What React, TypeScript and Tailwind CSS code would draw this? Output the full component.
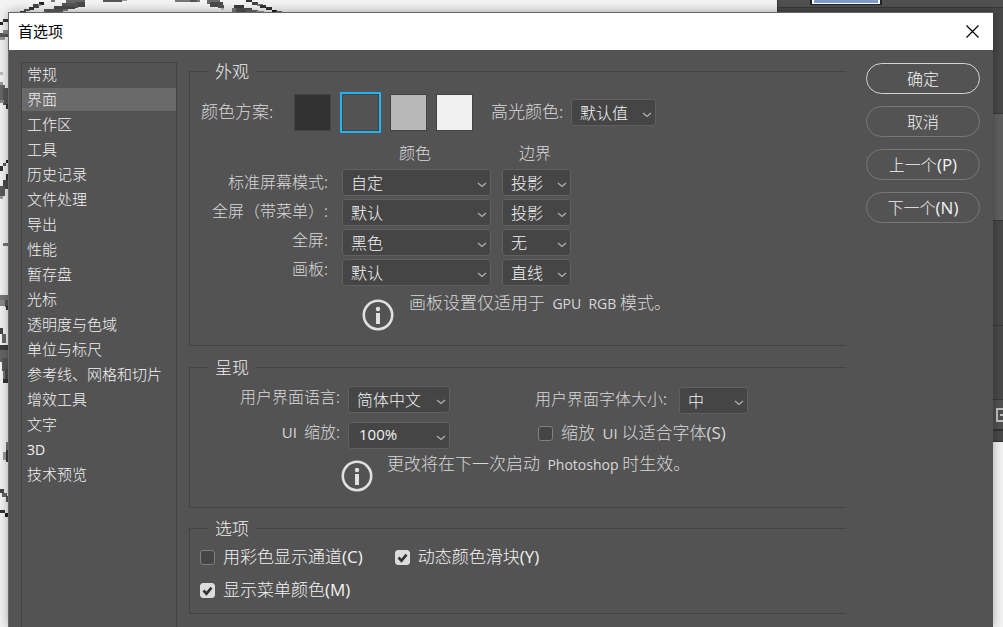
import { useState, type ReactNode } from "react";

const categories = [
    "常规",
    "界面",
    "工作区",
    "工具",
    "历史记录",
    "文件处理",
    "导出",
    "性能",
    "暂存盘",
    "光标",
    "透明度与色域",
    "单位与标尺",
    "参考线、网格和切片",
    "增效工具",
    "文字",
    "3D",
    "技术预览",
];

const screenModes = [
    { id: "standard", label: "标准屏幕模式:", color: "自定", border: "投影" },
    { id: "full-menu", label: "全屏（带菜单）:", color: "默认", border: "投影" },
    { id: "full", label: "全屏:", color: "黑色", border: "无" },
    { id: "artboard", label: "画板:", color: "默认", border: "直线" },
];

const themes = [
    { name: "深色", className: "bg-[#323232]" },
    { name: "中深色", className: "bg-[#535353]" },
    { name: "中浅色", className: "bg-[#b8b8b8]" },
    { name: "浅色", className: "bg-[#f0f0f0]" },
];

// x, y, width, height, fill
const pixels: [number, number, number, number, string][] = [
    [39, 2, 5, 3, "#222"], [33, 4, 6, 4, "#444"], [38, 4, 3, 2, "#888"], [29, 7, 5, 3, "#333"], [24, 9, 6, 2, "#555"], [20, 11, 6, 2, "#333"],
    [51, 0, 4, 2, "#777"], [66, 0, 19, 3, "#666"], [76, 2, 9, 5, "#4a4a4a"], [62, 3, 16, 5, "#555"], [54, 6, 21, 3, "#4a4a4a"], [60, 9, 8, 2, "#777"],
    [44, 9, 19, 4, "#5a5a5a"], [103, 0, 19, 2, "#555"], [122, 0, 5, 1, "#999"], [175, 0, 25, 2, "#777"], [190, 0, 7, 2, "#555"],
    [207, 0, 13, 4, "#6a6a6a"], [210, 2, 13, 5, "#4a4a4a"], [218, 5, 6, 3, "#555"], [221, 8, 3, 2, "#bbb"],
    [246, 0, 6, 2, "#333"], [252, 2, 6, 3, "#444"], [257, 4, 6, 2, "#777"], [260, 5, 6, 3, "#333"], [266, 7, 6, 3, "#333"], [272, 10, 5, 3, "#222"], [276, 11, 6, 2, "#666"],
    [234, 5, 10, 5, "#3c3c3c"], [232, 8, 9, 4, "#777"], [236, 8, 16, 4, "#505050"], [246, 10, 12, 3, "#666"], [256, 11, 8, 2, "#999"],
    [0, 22, 3, 3, "#222"], [3, 19, 6, 3, "#333"], [0, 33, 9, 4, "#555"], [3, 30, 6, 4, "#888"], [0, 37, 5, 3, "#999"],
    [0, 72, 3, 3, "#bbb"], [0, 82, 3, 3, "#999"], [0, 85, 5, 15, "#666"], [3, 88, 6, 17, "#555"], [0, 100, 4, 3, "#888"], [6, 104, 3, 5, "#333"],
    [6, 160, 3, 3, "#222"], [3, 163, 3, 3, "#555"], [0, 166, 3, 5, "#333"], [6, 174, 3, 9, "#333"], [3, 180, 5, 9, "#4a4a4a"],
    [0, 186, 5, 10, "#5a5a5a"], [0, 196, 3, 3, "#999"], [3, 243, 6, 3, "#777"], [0, 295, 9, 5, "#777"], [0, 300, 5, 6, "#888"], [5, 300, 4, 7, "#555"], [6, 306, 3, 4, "#333"],
    [0, 328, 3, 6, "#444"], [2, 334, 4, 9, "#666"], [0, 345, 9, 5, "#3c3c3c"], [0, 350, 9, 12, "#666"], [2, 358, 7, 13, "#555"], [3, 371, 3, 8, "#777"], [5, 369, 4, 11, "#4a4a4a"], [3, 379, 6, 4, "#333"],
    [6, 442, 3, 9, "#777"], [3, 452, 3, 8, "#999"], [6, 450, 3, 12, "#3c3c3c"], [0, 489, 4, 4, "#444"], [2, 493, 5, 4, "#666"], [6, 496, 3, 6, "#555"], [0, 510, 5, 3, "#333"], [5, 513, 4, 4, "#222"],
];

function Backdrop() {
    return (
        <div aria-hidden="true" className="absolute inset-0 overflow-hidden bg-[#f3f3f3]">
            <svg width="300" height="627" className="absolute top-0 left-0" shapeRendering="crispEdges">
                {pixels.map(([x, y, w, h, fill], i) => (
                    <rect key={i} x={x} y={y} width={w} height={h} fill={fill} />
                ))}
            </svg>
            <div className="absolute top-0 right-0 h-[442px] w-[226px] border-b border-l border-[#333] bg-[#484848]">
                <div className="h-2 border-b border-[#383838] bg-[#505050]" />
                <div className="absolute top-0 left-[32px] h-[5px] w-[72px] border-x-2 border-b border-[#222] bg-white px-[2px] pb-px">
                    <div className="h-[3px] bg-[#7f9cc8]" />
                </div>
                <div className="mt-[105px] h-[108px] border-y border-[#3a3a3a] bg-[#5f5f5f]" />
                <div className="h-[105px] border-b border-[#383838]" />
                <div className="h-[74px] border-b border-[#383838]" />
                <div className="h-[31px] border-b-2 border-[#333] bg-[#505050]" />
                <svg width="7" height="16" viewBox="0 0 7 16" className="absolute right-0 bottom-[18px]" fill="none" stroke="#c4c4c4" strokeWidth="2">
                    <path d="M7 2H1v12h6M4 8h3" />
                </svg>
            </div>
        </div>
    );
}

function Latin({ children, className = "text-[15px]" }: { children: ReactNode; className?: string }) {
    return (
        <span className={`font-['Open_Sans',sans-serif] leading-none font-normal ${className}`}>
            {children}
        </span>
    );
}

function Select({ id, value, label, className }: { id?: string; value: string; label?: string; className: string }) {
    return (
        <div className={`relative h-[27px] ${className}`}>
            <select
                id={id}
                aria-label={label}
                defaultValue={value}
                className={`block h-full w-full appearance-none rounded-[3px] border border-[#606060] bg-[#454545] pb-[2px] text-[#f2f2f2] outline-none ${value === "100%" ? "pl-[10px] font-['Open_Sans',sans-serif] text-[15px] font-normal" : "pl-2 text-base font-light"}`}
            >
                <option>{value}</option>
            </select>
            <svg width="10" height="6" viewBox="0 0 10 6" className="pointer-events-none absolute right-1 bottom-2" fill="none" stroke="#b0b0b0" strokeWidth="1.3">
                <path d="M1 1l4 3.4L9 1" />
            </svg>
        </div>
    );
}

function Checkbox({ children, defaultChecked }: { children: ReactNode; defaultChecked?: boolean }) {
    return (
        <label className="flex items-center gap-2 text-[17px] leading-6">
            <span className="relative size-[15px]">
                <input
                    type="checkbox"
                    defaultChecked={defaultChecked}
                    className="peer block size-[15px] appearance-none rounded-[3px] border border-[#808080] bg-[#454545] checked:border-[#dcdcdc] checked:bg-[#dcdcdc]"
                />
                <svg width="15" height="15" viewBox="0 0 15 15" className="pointer-events-none absolute inset-0 hidden peer-checked:block" fill="none" stroke="#333" strokeWidth="2.6">
                    <path d="M3.5 7.5l3 3.2 5-6" />
                </svg>
            </span>
            <span className="pb-[2px]">{children}</span>
        </label>
    );
}

function InfoIcon() {
    return (
        <svg width="32" height="32" viewBox="0 0 32 32" className="shrink-0">
            <circle cx="16" cy="16" r="14.2" fill="none" stroke="#e0e0e0" strokeWidth="2.6" />
            <circle cx="16" cy="10" r="2.2" fill="#e0e0e0" />
            <path d="M16 14v11" stroke="#e0e0e0" strokeWidth="4" />
        </svg>
    );
}

function Group({ title, className, children }: { title: string; className: string; children: ReactNode }) {
    return (
        <fieldset className={`min-w-0 border border-r-0 border-[#434343] ${className}`}>
            <legend className="ml-[18px] px-[7px] text-[17px] leading-5 text-[#f0f0f0]">{title}</legend>
            {children}
        </fieldset>
    );
}

function ActionButton({ children, primary }: { children: ReactNode; primary?: boolean }) {
    return (
        <button
            className={`h-[31px] w-[114px] rounded-full border pb-[2px] text-base leading-5 ${primary ? "border-[#d4d4d4]" : "border-[#777]"}`}
        >
            {children}
        </button>
    );
}

function App() {
    const [active, setActive] = useState("界面");
    const [theme, setTheme] = useState("中深色");

    return (
        <div className="relative flex min-h-screen flex-col overflow-hidden pt-3 pr-[10px] pl-2 font-['Noto_Sans_CJK_SC',sans-serif] font-light">
            <Backdrop />
            <div role="dialog" aria-label="首选项" className="relative flex flex-1 flex-col border-t border-l border-[#666] bg-[#535353] text-[#f2f2f2] shadow-[0_0_10px_#00000055]">
                <header className="flex h-[37px] items-center justify-between bg-white pr-[14px] pl-[9px] text-black">
                    <h1 className="pb-[2px] text-[15px] leading-5 font-normal">首选项</h1>
                    <button aria-label="关闭">
                        <svg width="13" height="13" viewBox="0 0 13 13" fill="none" stroke="#000" strokeWidth="1.2">
                            <path d="M.5 .5l12 12M12.5 .5l-12 12" />
                        </svg>
                    </button>
                </header>

                <div className="flex flex-1 pr-[13px] pl-3">
                    <nav className="mt-3 w-[156px] shrink-0 border border-b-0 border-[#434343]">
                        <ul className="space-y-[2px]">
                            {categories.map((name) => (
                                <li key={name}>
                                    <button
                                        onClick={() => setActive(name)}
                                        className={`block h-[23px] w-full pb-[2px] pl-[5px] text-left text-[15px] leading-5 ${name === active ? "bg-[#6a6a6a]" : ""}`}
                                    >
                                        {name === "3D" ? <Latin className="text-sm">{name}</Latin> : name}
                                    </button>
                                </li>
                            ))}
                        </ul>
                    </nav>

                    <main className="ml-3 min-w-0 flex-1 pt-[11px] text-[#d8d8d8]">
                        <Group title="外观" className="h-[285px]">
                            <div className="mt-[11px] flex items-center pl-[11px] text-[17px]">
                                <span className="w-[93px] pb-1">颜色方案:</span>
                                <div className="flex h-[41px] items-center gap-[9px]">
                                    {themes.map((t) => (
                                        <button
                                            key={t.name}
                                            aria-label={t.name}
                                            onClick={() => setTheme(t.name)}
                                            className={theme === t.name ? "border-2 border-[#1eb4f5]" : ""}
                                        >
                                            <span className={`block size-[37px] border border-[#434343] ${t.className}`} />
                                        </button>
                                    ))}
                                </div>
                                <label htmlFor="highlight" className="ml-[18px] w-[80px] pb-1">高光颜色:</label>
                                <Select id="highlight" value="默认值" className="w-[85px]" />
                            </div>

                            <div className="mt-[7px] flex h-6 text-base leading-6">
                                <span className="ml-[209px] w-[120px]">颜色</span>
                                <span>边界</span>
                            </div>

                            <div className="mt-[3px] flex">
                                <div className="flex w-[138px] flex-col text-right text-base leading-[29px]">
                                    {screenModes.map((m) => (
                                        <label key={m.id} htmlFor={m.id}>{m.label}</label>
                                    ))}
                                </div>
                                <div className="ml-[14px] space-y-[3px] pt-[2px]">
                                    {screenModes.map((m) => (
                                        <div key={m.id} className="flex gap-[11px]">
                                            <Select id={m.id} value={m.color} className="w-[149px]" />
                                            <Select label={`${m.label} 边界`} value={m.border} className="w-[69px]" />
                                        </div>
                                    ))}
                                </div>
                            </div>

                            <div className="mt-1 flex pl-[172px]">
                                <div className="pt-[9px]">
                                    <InfoIcon />
                                </div>
                                <p className="pl-[15px] text-[17px] leading-6">
                                    画板设置仅适用于&nbsp;<Latin className="text-sm">&nbsp;GPU&nbsp; RGB</Latin> 模式。
                                </p>
                            </div>
                        </Group>

                        <Group title="呈现" className="mt-[11px] h-[151px]">
                            <div className="flex">
                                <div className="flex w-[150px] flex-col pt-[6px] text-right text-base">
                                    <label htmlFor="language" className="leading-[26px]">用户界面语言:</label>
                                    <label htmlFor="scale" className="mt-[9px] leading-[26px]"><Latin>UI</Latin>&nbsp; 缩放:</label>
                                </div>
                                <div className="ml-2 space-y-[9px] pt-[9px]">
                                    <Select id="language" value="简体中文" className="w-[102px]" />
                                    <Select id="scale" value="100%" className="w-[102px]" />
                                </div>
                                <div className="ml-[85px] pt-[9px]">
                                    <div className="flex items-center text-base leading-[27px]">
                                        <label htmlFor="font-size" className="w-[144px] pb-1 leading-6">用户界面字体大小:</label>
                                        <Select id="font-size" value="中" className="w-[69px]" />
                                    </div>
                                    <div className="mt-[6px] pl-[3px]">
                                        <Checkbox>缩放&nbsp; <Latin>UI</Latin> 以适合字体<Latin className="text-[17px]">(S)</Latin></Checkbox>
                                    </div>
                                </div>
                            </div>
                            <div className="flex pl-[151px]">
                                <div className="pt-[11px]">
                                    <InfoIcon />
                                </div>
                                <p className="pl-[14px] text-[17px] leading-7">
                                    更改将在下一次启动&nbsp;<Latin className="text-sm">&nbsp;Photoshop</Latin> 时生效。
                                </p>
                            </div>
                        </Group>

                        <Group title="选项" className="mt-[10px] h-[96px]">
                            <div className="space-y-[7px] pt-[6px] pl-[10px] text-[#f2f2f2]">
                                <div className="flex gap-8">
                                    <Checkbox>用彩色显示通道<Latin className="text-[17px]">(C)</Latin></Checkbox>
                                    <Checkbox defaultChecked>动态颜色滑块<Latin className="text-[17px]">(Y)</Latin></Checkbox>
                                </div>
                                <Checkbox defaultChecked>显示菜单颜色<Latin className="text-[17px]">(M)</Latin></Checkbox>
                            </div>
                        </Group>
                    </main>

                    <div className="ml-5 flex shrink-0 flex-col gap-3 pt-[13px]">
                        <ActionButton primary>确定</ActionButton>
                        <ActionButton>取消</ActionButton>
                        <ActionButton>上一个<Latin className="text-[17px]">(P)</Latin></ActionButton>
                        <ActionButton>下一个<Latin className="text-[17px]">(N)</Latin></ActionButton>
                    </div>
                </div>
            </div>
        </div>
    );
}

export default App;
